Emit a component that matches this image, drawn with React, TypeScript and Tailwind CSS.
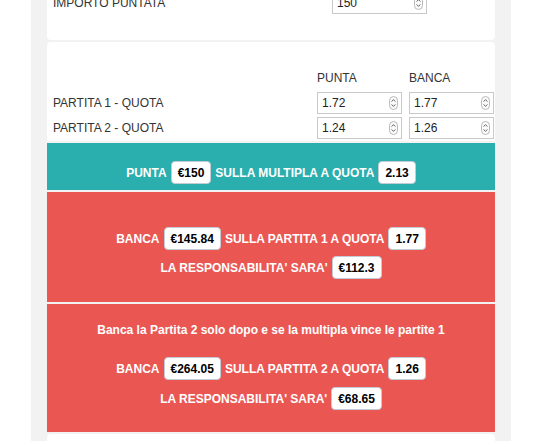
import React from "react"

const font = { fontFamily: '"Liberation Sans", Arial, Helvetica, sans-serif' }

function Spinner() {
  return (
    <svg width="9" height="14" viewBox="0 0 9 14" className="shrink-0">
      <rect x="0.5" y="0.5" width="8" height="13" rx="4" fill="#fafafa" stroke="#b9b9b9" />
      <path d="M2.6 5.6 L4.5 3.6 L6.4 5.6" fill="none" stroke="#555" strokeWidth="0.9" />
      <path d="M2.6 8.4 L4.5 10.4 L6.4 8.4" fill="none" stroke="#555" strokeWidth="0.9" />
    </svg>
  )
}

function NumInput({ value }: { value: string }) {
  return (
    <div className="h-[22px] border border-[#c9c9c9] bg-white flex items-center pl-[4px] pr-[3px] text-[12px] text-[#222]">
      <span className="flex-1">{value}</span>
      <Spinner />
    </div>
  )
}

function Badge({ children }: { children: React.ReactNode }) {
  return (
    <span className="h-[23px] inline-flex items-center px-[6px] bg-white border border-[#c3ccd6] rounded-[4px] text-black font-bold text-[12px]">
      {children}
    </span>
  )
}

function Line({ children }: { children: React.ReactNode }) {
  return (
    <div className="flex items-center justify-center gap-x-[4px] text-white font-bold text-[12px]">
      {children}
    </div>
  )
}

export default function App() {
  return (
    <div className="w-[540px] h-[441px] overflow-hidden bg-white" style={font}>
      <div className="ml-[31px] w-[480px] bg-[#f1f2f1] px-[16px] mt-[-19px] pb-[20px] flex flex-col gap-[2px]">
        {/* importo */}
        <div className="bg-white rounded-[4px] pt-[11px] pb-[26px] pl-[6px] flex items-center">
          <span className="text-[12px] text-[#333] w-[279px]">IMPORTO PUNTATA</span>
          <div className="w-[95px]">
            <NumInput value="150" />
          </div>
        </div>

        {/* quote */}
        <div className="bg-white rounded-t-[4px] pt-[28px] pb-[2px] pl-[6px] pr-[1px] grid grid-cols-[1fr_85px_85px] gap-x-[7px] gap-y-[3px] items-center text-[12px] text-[#333]">
          <div />
          <div className="h-[16px] mb-[3px] leading-[16px]">PUNTA</div>
          <div className="h-[16px] mb-[3px] leading-[16px]">BANCA</div>
          <div>PARTITA 1 - QUOTA</div>
          <NumInput value="1.72" />
          <NumInput value="1.77" />
          <div>PARTITA 2 - QUOTA</div>
          <NumInput value="1.24" />
          <NumInput value="1.26" />
        </div>

        {/* punta */}
        <div className="bg-[#2aaeae] pt-[18px] pb-[6px]">
          <Line>
            <span>PUNTA</span>
            <Badge>€150</Badge>
            <span>SULLA MULTIPLA A QUOTA</span>
            <Badge>2.13</Badge>
          </Line>
        </div>

        {/* banca partita 1 */}
        <div className="bg-[#ea5753] pt-[35px] pb-[23px] flex flex-col gap-[6px]">
          <Line>
            <span>BANCA</span>
            <Badge>€145.84</Badge>
            <span>SULLA PARTITA 1 A QUOTA</span>
            <Badge>1.77</Badge>
          </Line>
          <Line>
            <span>LA RESPONSABILITA' SARA'</span>
            <Badge>€112.3</Badge>
          </Line>
        </div>

        {/* banca partita 2 */}
        <div className="bg-[#ea5753] pt-[18px] pb-[22px] flex flex-col">
          <div className="text-center text-white font-bold text-[12px] leading-[16px] mb-[19px]">
            Banca la Partita 2 solo dopo e se la multipla vince le partite 1
          </div>
          <div className="flex flex-col gap-[7px]">
            <Line>
              <span>BANCA</span>
              <Badge>€264.05</Badge>
              <span>SULLA PARTITA 2 A QUOTA</span>
              <Badge>1.26</Badge>
            </Line>
            <Line>
              <span>LA RESPONSABILITA' SARA'</span>
              <Badge>€68.65</Badge>
            </Line>
          </div>
        </div>

        <div className="bg-white rounded-t-[4px] h-[40px]" />
      </div>
    </div>
  )
}
